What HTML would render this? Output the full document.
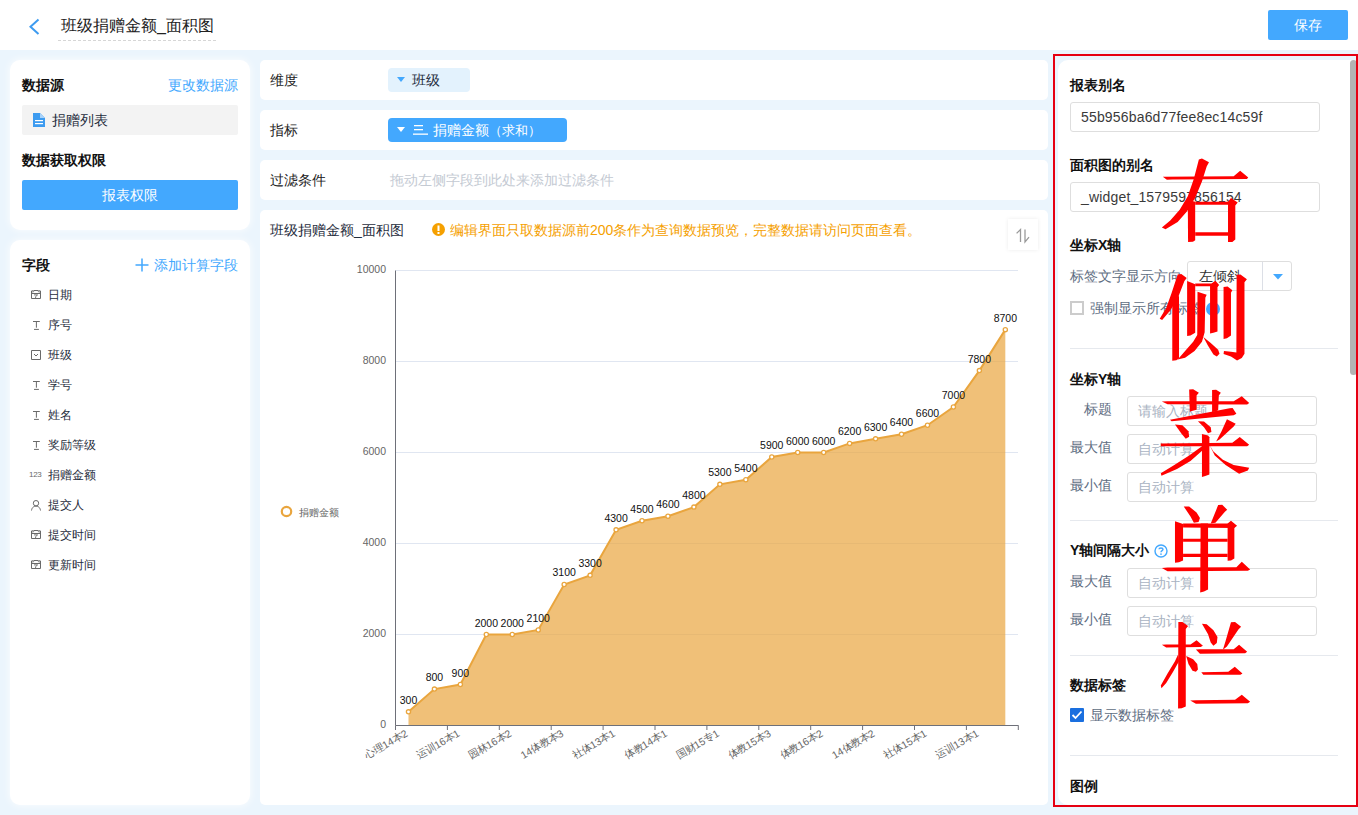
<!DOCTYPE html>
<html><head><meta charset="utf-8">
<style>
*{box-sizing:border-box;margin:0;padding:0}
html,body{width:1358px;height:815px;overflow:hidden;background:#ebf5fd;font-family:"Liberation Sans",sans-serif;color:#1f2d3d}
.a{position:absolute}
.hdr{left:0;top:0;width:1358px;height:50px;background:#fff}
.panel{background:#fff;border-radius:10px;box-shadow:0 0 8px rgba(255,255,255,.9)}
.row{background:#fff;border-radius:5px}
.t14{font-size:14px;line-height:16px;white-space:nowrap}
.dk{color:#222!important}
.t12{font-size:12px;line-height:14px;white-space:nowrap}
.b{font-weight:bold;color:#111}
.blue{color:#43a8fe}
.inp{border:1px solid #dedede;border-radius:3px;background:#fff}
.lbl{color:#5e6d82}
.ph{color:#a9b3c2}
.div{height:1px;background:#e6e9ee}
</style></head><body>
<!-- header -->
<div class="a hdr"></div>
<svg class="a" style="left:28px;top:18px" width="14" height="18" viewBox="0 0 14 18"><path d="M10.5 1.5 L2.5 8.8 L10.5 16" fill="none" stroke="#3d9bf0" stroke-width="2"/></svg>
<div class="a" style="left:61px;top:17px;font-size:16px;line-height:18px;color:#222;white-space:nowrap">班级捐赠金额_面积图</div>
<div class="a" style="left:58px;top:40px;width:158px;border-top:1px dashed #d6d6d6"></div>
<div class="a" style="left:1268px;top:10px;width:80px;height:30px;background:#43a8fe;border-radius:2px;color:#fff;font-size:14px;line-height:30px;text-align:center">保存</div>

<!-- left panel 1 -->
<div class="a panel" style="left:10px;top:60px;width:240px;height:170px"></div>
<div class="a t14 b" style="left:22px;top:77px">数据源</div>
<div class="a t14 blue" style="left:168px;top:77px">更改数据源</div>
<div class="a" style="left:22px;top:105px;width:216px;height:30px;background:#f3f3f3;border-radius:2px"></div>
<svg class="a" style="left:33px;top:113px" width="12" height="14" viewBox="0 0 12 14"><path d="M0 0 H7 L12 5 V14 H0 Z" fill="#3d9bf0"/><path d="M7 0 V5 H12" fill="#a9d3fa"/><rect x="2" y="7" width="8" height="1.2" fill="#fff"/><rect x="2" y="10" width="8" height="1.2" fill="#fff"/></svg>
<div class="a t14" style="left:52px;top:112px;color:#1f2d3d">捐赠列表</div>
<div class="a t14 b" style="left:22px;top:152px">数据获取权限</div>
<div class="a" style="left:22px;top:180px;width:216px;height:30px;background:#43a8fe;border-radius:2px;color:#fff;font-size:14px;line-height:30px;text-align:center">报表权限</div>

<!-- left panel 2 -->
<div class="a panel" style="left:10px;top:240px;width:240px;height:565px"></div>
<div class="a t14 b" style="left:22px;top:257px">字段</div>
<svg class="a" style="left:135px;top:258px" width="14" height="14"><path d="M7 0.5 V13.5 M0.5 7 H13.5" stroke="#43a8fe" stroke-width="1.5"/></svg><div class="a t14 blue" style="left:154px;top:257px">添加计算字段</div>
<svg class="a" style="left:31px;top:290px" width="11" height="10"><path d="M0.5 0.8 V8.5 H9.5 V0.8 M0.5 3.5 H9.5 M3 0.5 H7" fill="none" stroke="#6a6a6a" stroke-width="1"/><circle cx="1.8" cy="1.2" r="0.9" fill="none" stroke="#6a6a6a" stroke-width="0.8"/><circle cx="8.2" cy="1.2" r="0.9" fill="none" stroke="#6a6a6a" stroke-width="0.8"/><path d="M3 4.9 H6.6 L4.6 6.6 V8" fill="none" stroke="#6a6a6a" stroke-width="0.9"/></svg>
<div class="a t12" style="left:48px;top:288px;color:#1f2d3d">日期</div>
<svg class="a" style="left:32px;top:320px" width="9" height="11"><path d="M1 1.5 H7.8 M4.4 1.5 V7.7 M2 9.4 H6.9" stroke="#6a6a6a" stroke-width="1" fill="none"/></svg>
<div class="a t12" style="left:48px;top:318px;color:#1f2d3d">序号</div>
<svg class="a" style="left:31px;top:350px" width="11" height="10"><path d="M0.5 0.5 H9.5 V9.5 H0.5 Z" fill="none" stroke="#6a6a6a" stroke-width="1"/><path d="M3 4 L5 6 L7 4" fill="none" stroke="#6a6a6a" stroke-width="1"/></svg>
<div class="a t12" style="left:48px;top:348px;color:#1f2d3d">班级</div>
<svg class="a" style="left:32px;top:380px" width="9" height="11"><path d="M1 1.5 H7.8 M4.4 1.5 V7.7 M2 9.4 H6.9" stroke="#6a6a6a" stroke-width="1" fill="none"/></svg>
<div class="a t12" style="left:48px;top:378px;color:#1f2d3d">学号</div>
<svg class="a" style="left:32px;top:410px" width="9" height="11"><path d="M1 1.5 H7.8 M4.4 1.5 V7.7 M2 9.4 H6.9" stroke="#6a6a6a" stroke-width="1" fill="none"/></svg>
<div class="a t12" style="left:48px;top:408px;color:#1f2d3d">姓名</div>
<svg class="a" style="left:32px;top:440px" width="9" height="11"><path d="M1 1.5 H7.8 M4.4 1.5 V7.7 M2 9.4 H6.9" stroke="#6a6a6a" stroke-width="1" fill="none"/></svg>
<div class="a t12" style="left:48px;top:438px;color:#1f2d3d">奖励等级</div>
<div class="a" style="left:29px;top:470px;font-size:8px;line-height:10px;color:#6a6a6a;letter-spacing:-0.3px">123</div>
<div class="a t12" style="left:48px;top:468px;color:#1f2d3d">捐赠金额</div>
<svg class="a" style="left:31px;top:500px" width="11" height="11"><circle cx="5" cy="3.2" r="2.7" fill="none" stroke="#6a6a6a" stroke-width="1"/><path d="M0.5 10.5 C1 7 3 6.3 5 6.3 C7 6.3 9 7 9.5 10.5" fill="none" stroke="#6a6a6a" stroke-width="1"/></svg>
<div class="a t12" style="left:48px;top:498px;color:#1f2d3d">提交人</div>
<svg class="a" style="left:31px;top:530px" width="11" height="10"><path d="M0.5 0.8 V8.5 H9.5 V0.8 M0.5 3.5 H9.5 M3 0.5 H7" fill="none" stroke="#6a6a6a" stroke-width="1"/><circle cx="1.8" cy="1.2" r="0.9" fill="none" stroke="#6a6a6a" stroke-width="0.8"/><circle cx="8.2" cy="1.2" r="0.9" fill="none" stroke="#6a6a6a" stroke-width="0.8"/><path d="M3 4.9 H6.6 L4.6 6.6 V8" fill="none" stroke="#6a6a6a" stroke-width="0.9"/></svg>
<div class="a t12" style="left:48px;top:528px;color:#1f2d3d">提交时间</div>
<svg class="a" style="left:31px;top:560px" width="11" height="10"><path d="M0.5 0.8 V8.5 H9.5 V0.8 M0.5 3.5 H9.5 M3 0.5 H7" fill="none" stroke="#6a6a6a" stroke-width="1"/><circle cx="1.8" cy="1.2" r="0.9" fill="none" stroke="#6a6a6a" stroke-width="0.8"/><circle cx="8.2" cy="1.2" r="0.9" fill="none" stroke="#6a6a6a" stroke-width="0.8"/><path d="M3 4.9 H6.6 L4.6 6.6 V8" fill="none" stroke="#6a6a6a" stroke-width="0.9"/></svg>
<div class="a t12" style="left:48px;top:558px;color:#1f2d3d">更新时间</div>

<!-- middle rows -->
<div class="a row" style="left:260px;top:60px;width:788px;height:40px"></div>
<div class="a t14" style="left:270px;top:72px;color:#222">维度</div>
<div class="a" style="left:388px;top:68px;width:82px;height:24px;background:#e3f2fd;border-radius:4px"></div>
<svg class="a" style="left:397px;top:77px" width="9" height="6"><path d="M0 0 H8 L4 5 Z" fill="#43a8fe"/></svg>
<div class="a t14" style="left:412px;top:72px;color:#1f2d3d">班级</div>

<div class="a row" style="left:260px;top:110px;width:788px;height:40px"></div>
<div class="a t14" style="left:270px;top:122px;color:#222">指标</div>
<div class="a" style="left:388px;top:118px;width:179px;height:24px;background:#43a8fe;border-radius:4px"></div>
<svg class="a" style="left:397px;top:127px" width="9" height="6"><path d="M0 0 H8 L4 5 Z" fill="#fff"/></svg>
<svg class="a" style="left:413px;top:124px" width="16" height="12"><rect x="1" y="1" width="9" height="1.3" fill="#fff"/><rect x="1" y="5" width="9" height="1.3" fill="#fff"/><rect x="0" y="9.5" width="15" height="1.3" fill="#fff"/></svg>
<div class="a t14" style="left:433px;top:122px;color:#fff">捐赠金额<span style="font-size:13px">（求和）</span></div>

<div class="a row" style="left:260px;top:160px;width:788px;height:40px"></div>
<div class="a t14" style="left:270px;top:172px;color:#222">过滤条件</div>
<div class="a t14" style="left:390px;top:172px;color:#c4cad3">拖动左侧字段到此处来添加过滤条件</div>

<!-- chart panel -->
<div class="a row" style="left:260px;top:210px;width:788px;height:595px"></div>
<div class="a t14" style="left:270px;top:222px;color:#1f2d3d">班级捐赠金额_面积图</div>
<svg class="a" style="left:432px;top:223px" width="13" height="13"><circle cx="6.5" cy="6.5" r="6.5" fill="#f5a000"/><rect x="5.5" y="2.5" width="2" height="5.5" fill="#fff"/><rect x="5.5" y="9" width="2" height="2" fill="#fff"/></svg>
<div class="a t14" style="left:450px;top:222px;color:#f5a000">编辑界面只取数据源前200条作为查询数据预览，完整数据请访问页面查看。</div>
<div class="a" style="left:1008px;top:219px;width:30px;height:31px;background:#fff;box-shadow:0 0 4px rgba(0,0,0,.08)"></div>
<svg class="a" style="left:1008px;top:219px" width="30" height="31"><path d="M12.5 23 V10.5 L8.6 14.4" fill="none" stroke="#9a9a9a" stroke-width="1.3"/><path d="M17 10.5 V23 L21 18.2" fill="none" stroke="#9a9a9a" stroke-width="1.3"/></svg>
<svg id="chart" class="a" style="left:0;top:0" width="1358" height="815" font-family="&quot;Liberation Sans&quot;, sans-serif"><path d="M395.5 634.5 H1018" stroke="#e0e6f1" stroke-width="1"/><path d="M395.5 543.5 H1018" stroke="#e0e6f1" stroke-width="1"/><path d="M395.5 452.5 H1018" stroke="#e0e6f1" stroke-width="1"/><path d="M395.5 361.5 H1018" stroke="#e0e6f1" stroke-width="1"/><path d="M395.5 270.5 H1018" stroke="#e0e6f1" stroke-width="1"/><polygon points="408.48,725.5 408.48,711.85 434.43,689.10 460.38,684.55 486.32,634.50 512.27,634.50 538.23,629.95 564.17,584.45 590.12,575.35 616.08,529.85 642.02,520.75 667.97,516.20 693.92,507.10 719.88,484.35 745.83,479.80 771.77,457.05 797.72,452.50 823.67,452.50 849.62,443.40 875.58,438.85 901.52,434.30 927.48,425.20 953.42,407.00 979.38,370.60 1005.32,329.65 1005.32,725.5" fill="#e9a53e" fill-opacity="0.7"/><polyline points="408.48,711.85 434.43,689.10 460.38,684.55 486.32,634.50 512.27,634.50 538.23,629.95 564.17,584.45 590.12,575.35 616.08,529.85 642.02,520.75 667.97,516.20 693.92,507.10 719.88,484.35 745.83,479.80 771.77,457.05 797.72,452.50 823.67,452.50 849.62,443.40 875.58,438.85 901.52,434.30 927.48,425.20 953.42,407.00 979.38,370.60 1005.32,329.65" fill="none" stroke="#e9a53e" stroke-width="2"/><path d="M395.5 270.5 V725.5 H1018.5" fill="none" stroke="#6e7079" stroke-width="1"/><path d="M395.5 725.5 V730.0" stroke="#6e7079" stroke-width="1"/><path d="M447.4 725.5 V730.0" stroke="#6e7079" stroke-width="1"/><path d="M499.3 725.5 V730.0" stroke="#6e7079" stroke-width="1"/><path d="M551.2 725.5 V730.0" stroke="#6e7079" stroke-width="1"/><path d="M603.1 725.5 V730.0" stroke="#6e7079" stroke-width="1"/><path d="M655.0 725.5 V730.0" stroke="#6e7079" stroke-width="1"/><path d="M706.9 725.5 V730.0" stroke="#6e7079" stroke-width="1"/><path d="M758.8 725.5 V730.0" stroke="#6e7079" stroke-width="1"/><path d="M810.7 725.5 V730.0" stroke="#6e7079" stroke-width="1"/><path d="M862.6 725.5 V730.0" stroke="#6e7079" stroke-width="1"/><path d="M914.5 725.5 V730.0" stroke="#6e7079" stroke-width="1"/><path d="M966.4 725.5 V730.0" stroke="#6e7079" stroke-width="1"/><path d="M1018.3 725.5 V730.0" stroke="#6e7079" stroke-width="1"/><circle cx="408.48" cy="711.85" r="2.1" fill="#fff" stroke="#e9a53e" stroke-width="1.3"/><text x="408.48" y="703.85" text-anchor="middle" font-size="10.5" fill="#111">300</text><circle cx="434.43" cy="689.10" r="2.1" fill="#fff" stroke="#e9a53e" stroke-width="1.3"/><text x="434.43" y="681.10" text-anchor="middle" font-size="10.5" fill="#111">800</text><circle cx="460.38" cy="684.55" r="2.1" fill="#fff" stroke="#e9a53e" stroke-width="1.3"/><text x="460.38" y="676.55" text-anchor="middle" font-size="10.5" fill="#111">900</text><circle cx="486.32" cy="634.50" r="2.1" fill="#fff" stroke="#e9a53e" stroke-width="1.3"/><text x="486.32" y="626.50" text-anchor="middle" font-size="10.5" fill="#111">2000</text><circle cx="512.27" cy="634.50" r="2.1" fill="#fff" stroke="#e9a53e" stroke-width="1.3"/><text x="512.27" y="626.50" text-anchor="middle" font-size="10.5" fill="#111">2000</text><circle cx="538.23" cy="629.95" r="2.1" fill="#fff" stroke="#e9a53e" stroke-width="1.3"/><text x="538.23" y="621.95" text-anchor="middle" font-size="10.5" fill="#111">2100</text><circle cx="564.17" cy="584.45" r="2.1" fill="#fff" stroke="#e9a53e" stroke-width="1.3"/><text x="564.17" y="576.45" text-anchor="middle" font-size="10.5" fill="#111">3100</text><circle cx="590.12" cy="575.35" r="2.1" fill="#fff" stroke="#e9a53e" stroke-width="1.3"/><text x="590.12" y="567.35" text-anchor="middle" font-size="10.5" fill="#111">3300</text><circle cx="616.08" cy="529.85" r="2.1" fill="#fff" stroke="#e9a53e" stroke-width="1.3"/><text x="616.08" y="521.85" text-anchor="middle" font-size="10.5" fill="#111">4300</text><circle cx="642.02" cy="520.75" r="2.1" fill="#fff" stroke="#e9a53e" stroke-width="1.3"/><text x="642.02" y="512.75" text-anchor="middle" font-size="10.5" fill="#111">4500</text><circle cx="667.97" cy="516.20" r="2.1" fill="#fff" stroke="#e9a53e" stroke-width="1.3"/><text x="667.97" y="508.20" text-anchor="middle" font-size="10.5" fill="#111">4600</text><circle cx="693.92" cy="507.10" r="2.1" fill="#fff" stroke="#e9a53e" stroke-width="1.3"/><text x="693.92" y="499.10" text-anchor="middle" font-size="10.5" fill="#111">4800</text><circle cx="719.88" cy="484.35" r="2.1" fill="#fff" stroke="#e9a53e" stroke-width="1.3"/><text x="719.88" y="476.35" text-anchor="middle" font-size="10.5" fill="#111">5300</text><circle cx="745.83" cy="479.80" r="2.1" fill="#fff" stroke="#e9a53e" stroke-width="1.3"/><text x="745.83" y="471.80" text-anchor="middle" font-size="10.5" fill="#111">5400</text><circle cx="771.77" cy="457.05" r="2.1" fill="#fff" stroke="#e9a53e" stroke-width="1.3"/><text x="771.77" y="449.05" text-anchor="middle" font-size="10.5" fill="#111">5900</text><circle cx="797.72" cy="452.50" r="2.1" fill="#fff" stroke="#e9a53e" stroke-width="1.3"/><text x="797.72" y="444.50" text-anchor="middle" font-size="10.5" fill="#111">6000</text><circle cx="823.67" cy="452.50" r="2.1" fill="#fff" stroke="#e9a53e" stroke-width="1.3"/><text x="823.67" y="444.50" text-anchor="middle" font-size="10.5" fill="#111">6000</text><circle cx="849.62" cy="443.40" r="2.1" fill="#fff" stroke="#e9a53e" stroke-width="1.3"/><text x="849.62" y="435.40" text-anchor="middle" font-size="10.5" fill="#111">6200</text><circle cx="875.58" cy="438.85" r="2.1" fill="#fff" stroke="#e9a53e" stroke-width="1.3"/><text x="875.58" y="430.85" text-anchor="middle" font-size="10.5" fill="#111">6300</text><circle cx="901.52" cy="434.30" r="2.1" fill="#fff" stroke="#e9a53e" stroke-width="1.3"/><text x="901.52" y="426.30" text-anchor="middle" font-size="10.5" fill="#111">6400</text><circle cx="927.48" cy="425.20" r="2.1" fill="#fff" stroke="#e9a53e" stroke-width="1.3"/><text x="927.48" y="417.20" text-anchor="middle" font-size="10.5" fill="#111">6600</text><circle cx="953.42" cy="407.00" r="2.1" fill="#fff" stroke="#e9a53e" stroke-width="1.3"/><text x="953.42" y="399.00" text-anchor="middle" font-size="10.5" fill="#111">7000</text><circle cx="979.38" cy="370.60" r="2.1" fill="#fff" stroke="#e9a53e" stroke-width="1.3"/><text x="979.38" y="362.60" text-anchor="middle" font-size="10.5" fill="#111">7800</text><circle cx="1005.32" cy="329.65" r="2.1" fill="#fff" stroke="#e9a53e" stroke-width="1.3"/><text x="1005.32" y="321.65" text-anchor="middle" font-size="10.5" fill="#111">8700</text><text x="386" y="728.0" text-anchor="end" font-size="10.5" fill="#666">0</text><text x="386" y="637.0" text-anchor="end" font-size="10.5" fill="#666">2000</text><text x="386" y="546.0" text-anchor="end" font-size="10.5" fill="#666">4000</text><text x="386" y="455.0" text-anchor="end" font-size="10.5" fill="#666">6000</text><text x="386" y="364.0" text-anchor="end" font-size="10.5" fill="#666">8000</text><text x="386" y="273.0" text-anchor="end" font-size="10.5" fill="#666">10000</text><text transform="translate(408.5,735.5) rotate(-30)" text-anchor="end" font-size="10.4" fill="#666">心理14本2</text><text transform="translate(460.4,735.5) rotate(-30)" text-anchor="end" font-size="10.4" fill="#666">运训16本1</text><text transform="translate(512.3,735.5) rotate(-30)" text-anchor="end" font-size="10.4" fill="#666">园林16本2</text><text transform="translate(564.2,735.5) rotate(-30)" text-anchor="end" font-size="10.4" fill="#666">14体教本3</text><text transform="translate(616.1,735.5) rotate(-30)" text-anchor="end" font-size="10.4" fill="#666">社体13本1</text><text transform="translate(668.0,735.5) rotate(-30)" text-anchor="end" font-size="10.4" fill="#666">体教14本1</text><text transform="translate(719.9,735.5) rotate(-30)" text-anchor="end" font-size="10.4" fill="#666">国财15专1</text><text transform="translate(771.8,735.5) rotate(-30)" text-anchor="end" font-size="10.4" fill="#666">体教15本3</text><text transform="translate(823.7,735.5) rotate(-30)" text-anchor="end" font-size="10.4" fill="#666">体教16本2</text><text transform="translate(875.6,735.5) rotate(-30)" text-anchor="end" font-size="10.4" fill="#666">14体教本2</text><text transform="translate(927.5,735.5) rotate(-30)" text-anchor="end" font-size="10.4" fill="#666">社体15本1</text><text transform="translate(979.4,735.5) rotate(-30)" text-anchor="end" font-size="10.4" fill="#666">运训13本1</text><circle cx="286.5" cy="511.5" r="4.7" fill="none" stroke="#e9a53e" stroke-width="2.2"/><text x="299" y="515.5" font-size="10" fill="#666">捐赠金额</text></svg>

<!-- right panel -->
<div class="a" style="left:1058px;top:60px;width:300px;height:745px;background:#fff;border-radius:10px 0 0 10px"></div>
<div class="a t14 b" style="left:1070px;top:77px">报表别名</div>
<div class="a inp" style="left:1070px;top:102px;width:250px;height:30px"></div>
<div class="a t14" style="left:1081px;top:109.0px;color:#3a3a3a;letter-spacing:0.17px;">55b956ba6d77fee8ec14c59f</div>
<div class="a t14 b" style="left:1070px;top:157px">面积图的别名</div>
<div class="a inp" style="left:1070px;top:182px;width:250px;height:30px"></div>
<div class="a t14" style="left:1081px;top:189.0px;color:#3a3a3a;letter-spacing:0.17px;">_widget_1579597856154</div>
<div class="a t14 b" style="left:1070px;top:237px">坐标X轴</div>
<div class="a t14 lbl" style="left:1070px;top:268px">标签文字显示方向</div>
<div class="a inp" style="left:1187px;top:261px;width:105px;height:30px"></div>
<div class="a" style="left:1262px;top:262px;width:1px;height:28px;background:#dcdfe6"></div>
<svg class="a" style="left:1273px;top:274px" width="12" height="7"><path d="M0 0 H10 L5 5.5 Z" fill="#43a8fe"/></svg>
<div class="a t14" style="left:1199px;top:268px;color:#333">左倾斜</div>
<div class="a" style="left:1070px;top:301px;width:14px;height:14px;border:2px solid #cccccc;background:#fff"></div>
<div class="a t14 lbl" style="left:1090px;top:300px">强制显示所有标签</div>
<div class="a" style="left:1206px;top:302px;width:14px;height:14px;border-radius:7px;background:#43a8fe"></div>
<div class="a div" style="left:1070px;top:348px;width:268px"></div>
<div class="a t14 b" style="left:1070px;top:371px">坐标Y轴</div>
<div class="a t14 lbl" style="left:1084px;top:401px">标题</div>
<div class="a inp" style="left:1127px;top:396px;width:190px;height:30px"></div>
<div class="a t14" style="left:1138px;top:403.0px;color:#a9b3c2;">请输入标题</div>
<div class="a t14 lbl" style="left:1070px;top:439px">最大值</div>
<div class="a inp" style="left:1127px;top:434px;width:190px;height:30px"></div>
<div class="a t14" style="left:1138px;top:441.0px;color:#a9b3c2;">自动计算</div>
<div class="a t14 lbl" style="left:1070px;top:477px">最小值</div>
<div class="a inp" style="left:1127px;top:472px;width:190px;height:30px"></div>
<div class="a t14" style="left:1138px;top:479.0px;color:#a9b3c2;">自动计算</div>
<div class="a div" style="left:1070px;top:520px;width:268px"></div>
<div class="a t14 b" style="left:1070px;top:542px">Y轴间隔大小</div>
<svg class="a" style="left:1154px;top:544px" width="14" height="14"><circle cx="7" cy="7" r="6" fill="none" stroke="#43a8fe" stroke-width="1.4"/><path d="M5 5.3 C5 3.6 9 3.6 9 5.3 C9 6.6 7 6.6 7 8.3" fill="none" stroke="#43a8fe" stroke-width="1.4"/><rect x="6.3" y="9.4" width="1.4" height="1.5" fill="#43a8fe"/></svg>
<div class="a t14 lbl" style="left:1070px;top:573px">最大值</div>
<div class="a inp" style="left:1127px;top:568px;width:190px;height:30px"></div>
<div class="a t14" style="left:1138px;top:575.0px;color:#a9b3c2;">自动计算</div>
<div class="a t14 lbl" style="left:1070px;top:611px">最小值</div>
<div class="a inp" style="left:1127px;top:606px;width:190px;height:30px"></div>
<div class="a t14" style="left:1138px;top:613.0px;color:#a9b3c2;">自动计算</div>
<div class="a div" style="left:1070px;top:655px;width:268px"></div>
<div class="a t14 b" style="left:1070px;top:677px">数据标签</div>
<div class="a" style="left:1070px;top:708px;width:14px;height:14px;background:#1a6fdf;border-radius:1px"></div>
<svg class="a" style="left:1070px;top:708px" width="14" height="14"><path d="M2.5 7 L5.5 10 L11.5 3.5" fill="none" stroke="#fff" stroke-width="1.8"/></svg>
<div class="a t14 lbl" style="left:1090px;top:707px">显示数据标签</div>
<div class="a div" style="left:1070px;top:755px;width:268px"></div>
<div class="a t14 b" style="left:1070px;top:778px">图例</div>
<div class="a" style="left:1350px;top:60px;width:7px;height:315px;background:#b3b3b3;border-radius:4px 4px 4px 4px"></div>
<div class="a" style="left:1053px;top:54px;width:305px;height:753px;border:2px solid #e60012"></div>
<svg class="a" style="left:0;top:0" width="1358" height="815" fill="#ff0000"><g transform="translate(1150,145) scale(0.134969)"><path d="M95 236 L620 232 L668 190 L728 240 L718 252 L165 256 L125 258 Z"/><path d="M362 108 L385 100 L437 128 L420 160 L385 270 L335 390 L275 490 L205 570 L115 625 L88 612 L150 560 L220 480 L280 380 L325 250 Z"/><path d="M280 405 L335 420 L335 705 L318 716 L282 718 Z"/><path d="M578 420 L600 392 L650 426 L632 448 L632 700 L610 718 L578 718 Z"/><path d="M335 420 L578 420 L578 442 L335 442 Z"/><path d="M335 646 L578 646 L578 672 L335 672 Z"/></g><g transform="translate(1150,262) scale(0.134969)"><path d="M205 92 L232 88 L272 118 L255 140 L205 270 L150 360 L90 430 L72 420 L120 340 L160 230 Z"/><path d="M165 290 L215 250 L215 715 L195 728 L165 732 Z"/><path d="M275 140 L335 165 L335 525 L300 545 L275 548 Z"/><path d="M335 160 L455 160 L485 138 L512 170 L500 185 L445 180 L335 180 Z"/><path d="M445 170 L500 170 L500 515 L470 525 L445 530 Z"/><path d="M352 220 L420 242 L410 265 L405 520 L385 590 L330 660 L260 710 L205 722 L260 660 L320 590 L350 540 Z"/><path d="M395 555 L450 600 L505 650 L515 680 L495 700 L470 685 L430 620 Z"/><path d="M545 185 L575 182 L610 210 L600 228 L600 545 L570 565 L545 570 Z"/><path d="M642 95 L670 92 L718 128 L700 150 L700 680 L680 712 L645 730 L600 700 L545 682 L548 660 L600 665 L640 670 Z"/></g><g transform="translate(1150,380) scale(0.134969)"><path d="M88 160 L130 158 L620 158 L680 120 L735 170 L720 182 L130 180 Z"/><path d="M290 70 L320 68 L362 95 L345 115 L345 220 L310 230 L295 235 Z"/><path d="M460 75 L490 72 L525 95 L510 115 L505 225 L480 235 L460 238 Z"/><path d="M148 295 L590 210 L612 208 L640 250 L620 262 L160 305 Z"/><path d="M185 330 L240 335 L285 380 L290 420 L265 435 L235 400 Z"/><path d="M355 305 L400 308 L450 350 L455 385 L430 395 L400 350 Z"/><path d="M570 290 L635 325 L620 345 L515 440 L490 455 L530 380 Z"/><path d="M80 470 L610 465 L665 422 L735 480 L720 490 L80 490 Z"/><path d="M385 400 L430 412 L440 425 L440 700 L410 712 L385 718 Z"/><path d="M385 490 L390 520 L300 600 L200 660 L85 710 L80 690 L180 630 L290 560 Z"/><path d="M440 480 L470 530 L540 590 L620 630 L735 650 L725 670 L660 695 L560 630 L480 560 Z"/></g><g transform="translate(1150,495) scale(0.134969)"><path d="M250 85 L290 85 L345 130 L370 170 L360 200 L325 205 L300 160 Z"/><path d="M505 75 L535 72 L572 110 L555 125 L485 205 L450 212 Z"/><path d="M185 195 L245 215 L245 485 L215 498 L185 502 Z"/><path d="M245 212 L575 212 L600 190 L645 228 L625 245 L245 240 Z"/><path d="M575 212 L625 235 L625 470 L600 485 L575 488 Z"/><path d="M245 325 L575 325 L575 347 L245 347 Z"/><path d="M245 435 L575 435 L575 460 L245 460 Z"/><path d="M375 212 L430 212 L430 700 L400 715 L372 722 Z"/><path d="M88 540 L130 538 L640 535 L680 495 L742 552 L725 562 L130 565 Z"/></g><g transform="translate(1150,610) scale(0.134969)"><path d="M88 258 L120 255 L300 255 L345 225 L392 265 L375 275 L120 278 Z"/><path d="M210 88 L240 88 L282 118 L265 140 L265 715 L235 728 L208 730 Z"/><path d="M208 330 L215 380 L170 460 L120 540 L85 580 L80 560 L130 470 L185 380 Z"/><path d="M268 340 L320 365 L350 400 L355 440 L340 458 L315 450 L285 400 Z"/><path d="M385 102 L420 105 L470 150 L500 200 L495 245 L470 265 L450 240 L430 180 Z"/><path d="M600 90 L630 88 L675 125 L655 145 L570 270 L540 295 L560 230 Z"/><path d="M340 292 L370 290 L620 290 L660 258 L720 310 L705 320 L370 325 Z"/><path d="M380 462 L580 458 L628 420 L685 470 L670 480 L395 480 Z"/><path d="M298 670 L340 668 L630 665 L680 628 L742 680 L725 690 L340 695 Z"/></g></svg>
</body></html>
